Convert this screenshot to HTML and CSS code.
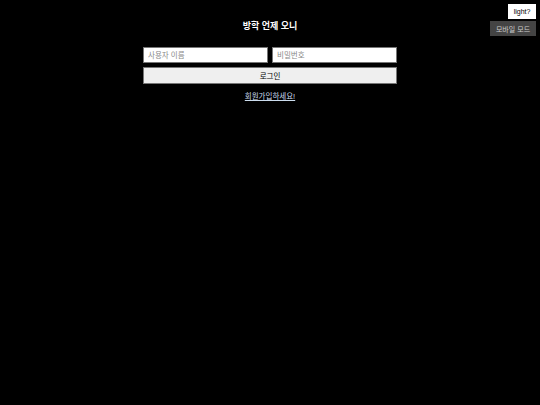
FILE: index.html
```html
<!DOCTYPE html>
<html lang="ko">
<head>
<meta charset="utf-8">
<link rel="stylesheet" href="styles.css">
</head>
<body>
<div class="corner">
  <button class="light-btn">light?</button>
  <button class="mobile-btn">모바일 모드</button>
</div>
<main class="wrap">
  <h1 class="title">방학 언제 오니</h1>
  <form class="login">
    <div class="row">
      <input class="field" type="text" placeholder="사용자 이름">
      <input class="field" type="password" placeholder="비밀번호">
    </div>
    <button class="submit" type="button">로그인</button>
  </form>
  <a class="signup" href="#">회원가입하세요!</a>
</main>
</body>
</html>
```
FILE: styles.css
```css
html, body {
  margin: 0;
  padding: 0;
  background: #000;
  font-family: "Liberation Sans", "Noto Sans CJK KR", sans-serif;
  color: #fff;
}
.corner {
  position: absolute;
  top: 4px;
  right: 4px;
  display: flex;
  flex-direction: column;
  align-items: flex-end;
  gap: 2px;
}
.light-btn {
  background: #fff;
  color: #000;
  border: none;
  font: 7px "Liberation Sans", "Noto Sans CJK KR", sans-serif;
  height: 15px;
  width: 28px;
  padding: 0;
}
.mobile-btn {
  background: #444;
  color: #ccc;
  border: none;
  font: 7px "Liberation Sans", "Noto Sans CJK KR", sans-serif;
  height: 15px;
  width: 46px;
  padding: 0;
}
.wrap {
  width: 254px;
  margin: 0 auto;
  padding-top: 20px;
  text-align: center;
}
.title {
  font-size: 9px;
  font-weight: bold;
  margin: 0 0 15px 0;
  line-height: 12px;
}
.login {
  display: flex;
  flex-direction: column;
  gap: 4px;
}
.row {
  display: flex;
  gap: 4px;
}
.field {
  flex: 1;
  min-width: 0;
  height: 16px;
  box-sizing: border-box;
  border: 1px solid #767676;
  background: #fff;
  font: 7.5px "Liberation Sans", "Noto Sans CJK KR", sans-serif;
  padding: 0 4px;
  margin: 0;
}
.field::placeholder {
  color: #888;
}
.submit {
  height: 17px;
  box-sizing: border-box;
  border: 1px solid #767676;
  background: #efefef;
  color: #000;
  font: 7.5px "Liberation Sans", "Noto Sans CJK KR", sans-serif;
  margin: 0;
}
.signup {
  display: inline-block;
  margin-top: 6px;
  font-size: 7.5px;
  color: #cde;
}
```
